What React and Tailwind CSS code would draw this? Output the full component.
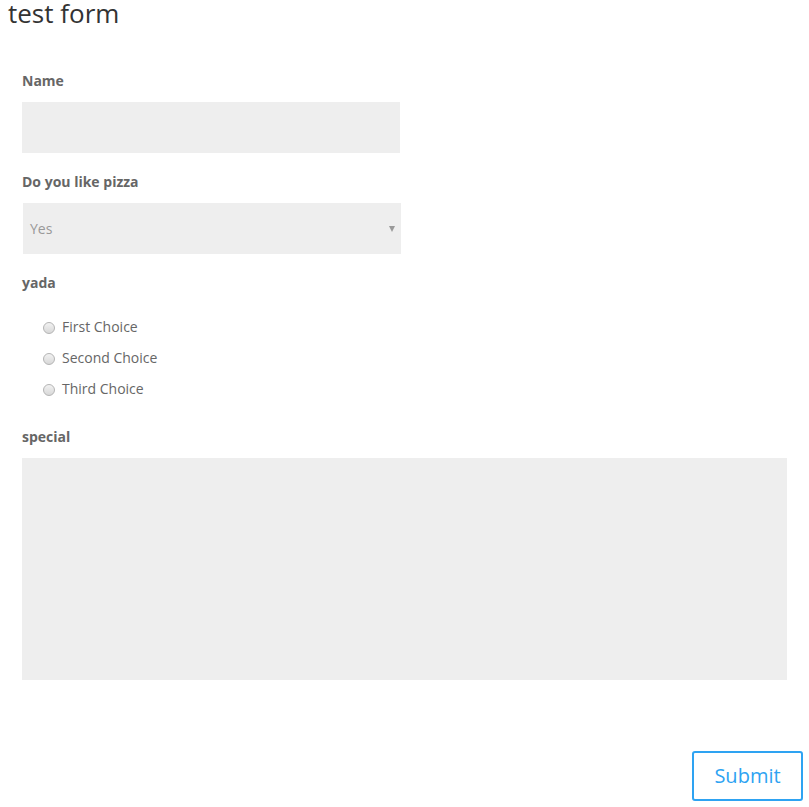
import React from 'react';

const choices = ['First Choice', 'Second Choice', 'Third Choice'];

const Label = ({ children, className = '' }) => (
  <div className={`text-[14px] leading-[20px] font-bold text-[#666] ${className}`}>{children}</div>
);

export default function App() {
  return (
    <div className="w-[809px] h-[807px] bg-white font-['Open_Sans',sans-serif] overflow-hidden">
      <h1 className="pl-[8px] text-[26px] leading-[30px] -mt-[2px] font-normal text-[#333]">test form</h1>

      <form className="px-[22px]">
        <Label className="mt-[43px]">Name</Label>
        <div className="mt-[11px] w-[378px] h-[51px] bg-[#eee]" />

        <Label className="mt-[19px]">Do you like pizza</Label>
        <div className="mt-[11px] ml-[1px] w-[378px] h-[51px] bg-[#eee] flex items-center justify-between pl-[7px] pr-[6px]">
          <span className="text-[14px] text-[#999]">Yes</span>
          <span className="w-0 h-0 border-l-[3px] border-r-[3px] border-t-[6px] border-l-transparent border-r-transparent border-t-[#999]" />
        </div>

        <Label className="mt-[19px]">yada</Label>
        <div className="mt-[23px] flex flex-col gap-[11px] pl-[21px]">
          {choices.map((c) => (
            <label key={c} className="flex items-center gap-[7px] h-[20px] text-[14px] text-[#666]">
              <span className="mt-[3px] w-[12px] h-[12px] rounded-full border border-[#b4b4b4] bg-gradient-to-b from-[#f2f2f2] to-[#d8d8d8]" />
              <span>{c}</span>
            </label>
          ))}
        </div>

        <Label className="mt-[29px]">special</Label>
        <div className="mt-[11px] w-full h-[222px] bg-[#eee]" />
      </form>

      <div className="flex justify-end pr-[6px] mt-[71px]">
        <button className="w-[111px] h-[50px] border-2 border-[#2ea3f2] rounded-[3px] text-[20px] text-[#2ea3f2] bg-white">
          Submit
        </button>
      </div>
    </div>
  );
}
